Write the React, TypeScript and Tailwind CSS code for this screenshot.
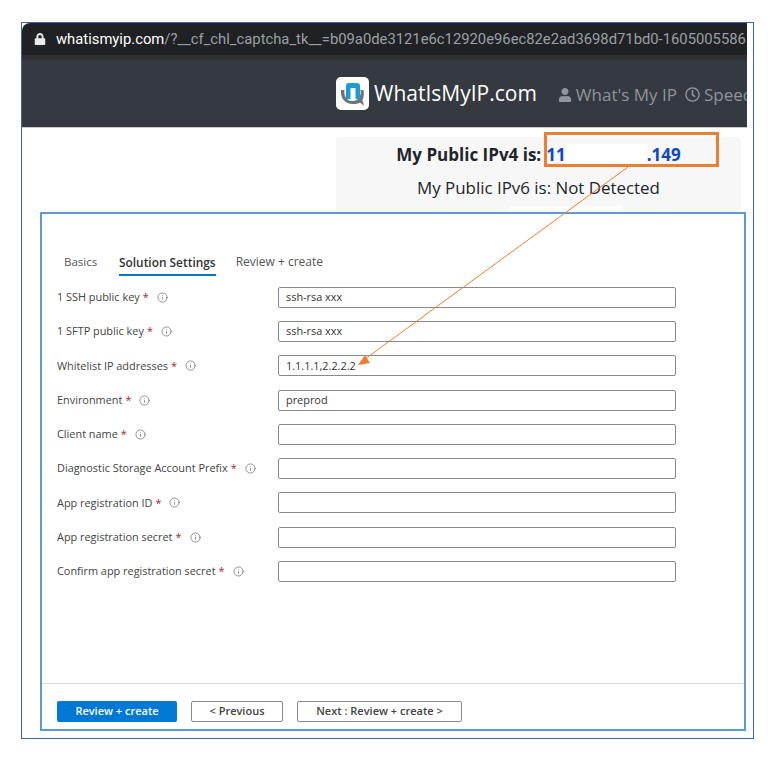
import { Info } from 'lucide-react';
import { FaLock, FaRegClock, FaUser } from 'react-icons/fa';

const fields = [
  { label: '1 SSH public key', value: 'ssh-rsa xxx' },
  { label: '1 SFTP public key', value: 'ssh-rsa xxx' },
  { label: 'Whitelist IP addresses', value: '1.1.1.1,2.2.2.2' },
  { label: 'Environment', value: 'preprod' },
  { label: 'Client name', value: '' },
  { label: 'Diagnostic Storage Account Prefix', value: '' },
  { label: 'App registration ID', value: '' },
  { label: 'App registration secret', value: '' },
  { label: 'Confirm app registration secret', value: '' },
];

function Logo() {
  return (
    <div className="w-[33px] h-[33px] shrink-0 rounded-[5px] bg-white">
      <svg width="33" height="33" viewBox="0 0 33 33">
        <path d="M5 13c-1 8 4 14 12 14 3 0 5-.5 7-1.500l4 3.500-1.500-6c1.500-3 1.500-6 1-10h-3c1 6-2 11-8 11s-9-5-8-11z" fill="#6f7377" />
        <path d="M10 9c0-2 1-3 3-3h8c2 0 3 1 3 3v13h-4.500V11h-5v11H10z" fill="#1a9ad6" />
      </svg>
    </div>
  );
}

function Field({ label, value }: { label: string; value: string }) {
  return (
    <div className="flex items-center h-[34.3px]">
      <div className="w-[221px] flex items-center text-[10.9px] text-[#444]">
        <span>{label}</span>
        <span className="text-[#a4262c] ml-[3px]">*</span>
        <Info size={11} strokeWidth={1.5} className="text-[#666] ml-[8px]" />
      </div>
      <div className="w-[398px] h-[21px] border border-[#8a8a8a] rounded-[2px] px-[7px] flex items-center text-[10.9px] text-[#333]">
        {value}
      </div>
    </div>
  );
}

export default function App() {
  return (
    <div className="relative w-[781px] h-[762px] bg-white overflow-hidden font-['Open_Sans',sans-serif]">
      <div className="absolute left-[21px] top-[22px] w-[733px] h-[717px] border border-[#3f64a8]">
        <div className="w-[725px] bg-white overflow-hidden">
          <div className="h-[32px] bg-[#202124] flex items-center pl-[12px] rounded-tl-[8px] whitespace-nowrap text-[14.8px] font-['Roboto',sans-serif]">
            <FaLock size={12} className="shrink-0 text-[#e8eaed]" />
            <span className="ml-[10px] text-white">whatismyip.com</span>
            <span className="text-[#9aa0a6]">/?__cf_chl_captcha_tk__=b09a0de3121e6c12920e96ec82e2ad3698d71bd0-1605005586</span>
          </div>
          <div className="h-[5px] bg-[#2f3135]" />
          <div className="h-[68px] bg-[#343a40] border-b border-[#c8c8c8] flex items-center pl-[314px] whitespace-nowrap">
            <Logo />
            <span className="shrink-0 ml-[5px] text-[21px] text-white">WhatIsMyIP.com</span>
            <FaUser size={14} className="shrink-0 mt-[2px] ml-[21px] text-[#8f959a]" />
            <span className="shrink-0 mt-[2px] ml-[4px] text-[17px] text-[#8f959a]">What's My IP</span>
            <FaRegClock size={15} className="shrink-0 mt-[2px] ml-[8px] text-[#8f959a]" />
            <span className="shrink-0 mt-[2px] ml-[4px] text-[17px] text-[#8f959a]">Speed</span>
          </div>
          <div className="ml-[314px] mt-[9px] w-[405px] h-[76px] bg-[#f7f7f7] rounded-[3px] flex flex-col items-center">
            <div className="flex items-center mt-[7px] h-[22px] text-[17px] font-bold whitespace-nowrap">
              <span className="text-[#212529]">My Public IPv4 is:</span>
              <span className="ml-[5px] text-[#0d47c9]">11</span>
              <span className="w-[81px] h-[22px] bg-white" />
              <span className="text-[#0d47c9]">.149</span>
            </div>
            <div className="mt-[9px] text-[16.9px] text-[#212529]">My Public IPv6 is: Not Detected</div>
          </div>
        </div>
      </div>

      {/* erased patch under the IPv6 line */}
      <div className="absolute left-[510px] top-[206px] w-[112px] h-[6px] bg-white" />

      {/* form panel pasted over the browser capture */}
      <div className="absolute left-[40px] top-[212px] w-[706px] h-[519px] border-2 border-[#5b9bd5] bg-white flex flex-col">
        <div className="flex items-start mt-[38px] ml-[22px] text-[12px] text-[#555]">
          <span className="w-[33px] text-[11.5px] leading-[20px] whitespace-nowrap">Basics</span>
          <span className="ml-[22px] pb-[2px] border-b-2 border-[#0078d4] font-semibold text-[11.9px] text-[#333] leading-[20px]">Solution Settings</span>
          <span className="ml-[20px] leading-[20px]">Review + create</span>
        </div>
        <div className="mt-[4px] ml-[15px]">
          {fields.map((field) => (
            <Field key={field.label} label={field.label} value={field.value} />
          ))}
        </div>
        <div className="mt-auto h-[46px] border-t border-[#d9d9d9] flex items-start pt-[17px] pl-[15px] text-[11px] font-semibold">
          <button className="w-[120px] h-[21px] rounded-[2px] bg-[#0078d4] text-white">Review + create</button>
          <button className="ml-[14px] w-[92px] h-[21px] rounded-[2px] border border-[#8a8a8a] text-[#444]">&lt; Previous</button>
          <button className="ml-[14px] w-[165px] h-[21px] rounded-[2px] border border-[#8a8a8a] text-[#444]">Next : Review + create &gt;</button>
        </div>
      </div>

      {/* callout box */}
      <div className="absolute left-[544px] top-[132px] w-[175px] h-[35px] border-[3px] border-[#ed7d31]" />

      {/* callout arrow */}
      <svg className="absolute left-0 top-0 pointer-events-none" width="781" height="762">
        <line x1="628" y1="167" x2="365" y2="359" stroke="#ed7d31" strokeWidth="1" />
        <polygon points="358,365 365,355 370,363" fill="#ed7d31" />
      </svg>
    </div>
  );
}
